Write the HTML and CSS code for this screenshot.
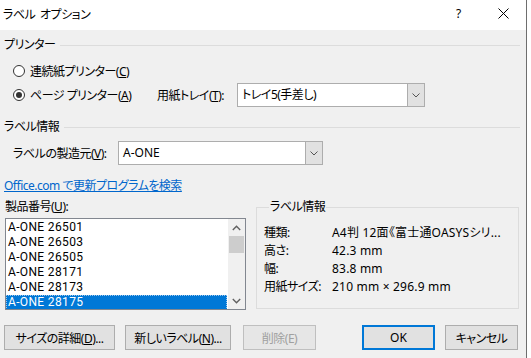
FILE: index.html
```html
<!DOCTYPE html>
<html>
	<head>
		<meta charset="utf-8" />
		<title>ラベル オプション</title>
		<link rel="stylesheet" href="styles.css">
	</head>
	<body>
		<div class="dialog">
			<div class="titlebar">
				<span class="title">ラベル オプション</span>
				<span class="help">?</span>
				<span class="close">
					<svg width="11" height="11" viewBox="0 0 11 11"><path d="M0.5 0.5L10.5 10.5M10.5 0.5L0.5 10.5" stroke="#000" stroke-width="1" fill="none" /></svg>
				</span>
			</div>
			<div class="content">
				<div class="group-head"><span>プリンター</span><i></i></div>
				<div class="radio-row first">
					<span class="radio"></span>
					<span>連続紙プリンター(<u>C</u>)</span>
				</div>
				<div class="radio-row">
					<span class="radio checked"></span>
					<span class="radio-text">ページ プリンター(<u>A</u>)</span>
					<span class="tray-label">用紙トレイ(<u>T</u>):</span>
					<div class="combo tray">
						<span class="combo-val">トレイ5(手差し)</span>
						<span class="combo-drop">
							<svg width="8" height="5" viewBox="0 0 8 5"><path d="M0.5 0.5L4 4L7.5 0.5" stroke="#555" fill="none" /></svg>
						</span>
					</div>
				</div>

				<div class="group-head second"><span>ラベル情報</span><i></i></div>
				<div class="maker-row">
					<span class="maker-label">ラベルの製造元(<u>V</u>):</span>
					<div class="combo maker">
						<span class="combo-val latin">A-ONE</span>
						<span class="combo-drop">
							<svg width="8" height="5" viewBox="0 0 8 5"><path d="M0.5 0.5L4 4L7.5 0.5" stroke="#555" fill="none" /></svg>
						</span>
					</div>
				</div>
				<a href="#" class="link">Office.com で更新プログラムを検索</a>

				<div class="lower">
					<div class="products">
						<div class="products-label">製品番号(<u>U</u>):</div>
						<div class="listbox">
							<div class="items">
								<div class="item">A-ONE 26501</div>
								<div class="item">A-ONE 26503</div>
								<div class="item">A-ONE 26505</div>
								<div class="item">A-ONE 28171</div>
								<div class="item">A-ONE 28173</div>
								<div class="item selected">A-ONE 28175</div>
							</div>
							<div class="scroll">
								<span class="arrow">
									<svg width="9" height="6" viewBox="0 0 9 6"><path d="M0.8 5L4.5 1.3L8.2 5" stroke="#606060" stroke-width="1.4" fill="none" /></svg>
								</span>
								<div class="track"><span class="thumb"></span></div>
								<span class="arrow">
									<svg width="9" height="6" viewBox="0 0 9 6"><path d="M0.8 1L4.5 4.7L8.2 1" stroke="#606060" stroke-width="1.4" fill="none" /></svg>
								</span>
							</div>
						</div>
					</div>
					<fieldset class="info">
						<legend>ラベル情報</legend>
						<div class="info-row"><span>種類:</span><span class="latin">A4判 12面《富士通OASYSシリ...</span></div>
						<div class="info-row"><span>高さ:</span><span class="latin">42.3 mm</span></div>
						<div class="info-row"><span>幅:</span><span class="latin">83.8 mm</span></div>
						<div class="info-row"><span>用紙サイズ:</span><span class="latin">210 mm × 296.9 mm</span></div>
					</fieldset>
				</div>

				<div class="buttons">
					<button class="btn size">サイズの詳細(<u>D</u>)...</button>
					<button class="btn new">新しいラベル(<u>N</u>)...</button>
					<button class="btn del" disabled>削除(E)</button>
					<button class="btn ok latin">OK</button>
					<button class="btn cancel">キャンセル</button>
				</div>
			</div>
		</div>
	</body>
</html>
```

FILE: styles.css
```css
* {
	padding: 0;
	margin: 0;
	box-sizing: border-box;
}

body {
	background-color: #fff;
	font-family: "Noto Sans", "Noto Sans CJK JP", sans-serif;
	font-size: 12px;
	color: #000;
	font-feature-settings: "palt";
	letter-spacing: -0.5px;
}

.latin {
	letter-spacing: 0;
}

.dialog {
	width: 527px;
	height: 358px;
	background-color: #f0f0f0;
	border-right: 1px solid #6e6e6e;
}

.titlebar {
	height: 30px;
	background-color: #fff;
	display: flex;
	align-items: center;
	padding: 0 0 3px 3px;
}

.title {
	flex: 1;
	word-spacing: 2px;
}

.help,
.close {
	width: 45px;
	display: flex;
	justify-content: center;
	align-items: center;
	letter-spacing: 0;
}

.content {
	padding: 7px 6px 0 4px;
}

.group-head {
	height: 16px;
	line-height: 16px;
	display: flex;
	align-items: center;
}

.group-head i {
	flex: 1;
	height: 1px;
	margin-left: 5px;
	background-color: #dcdcdc;
}

.group-head.second {
	margin-top: 12px;
}

.radio-row {
	height: 24px;
	display: flex;
	align-items: center;
	padding-left: 9px;
}

.radio-row.first {
	margin-top: 6px;
}

.radio {
	width: 12px;
	height: 12px;
	border: 1px solid #333;
	border-radius: 50%;
	background-color: #fff;
	margin-right: 5px;
	display: flex;
	justify-content: center;
	align-items: center;
}

.radio.checked::after {
	content: "";
	width: 6px;
	height: 6px;
	border-radius: 50%;
	background-color: #333;
}

.radio-text {
	width: 127px;
}

.tray-label {
	width: 80px;
}

.combo {
	height: 24px;
	display: flex;
	background-color: #fff;
	border: 1px solid #adadad;
}

.combo-val {
	flex: 1;
	line-height: 22px;
	padding-left: 4px;
}

.combo-drop {
	width: 17px;
	background-color: #e1e1e1;
	border-left: 1px solid #adadad;
	display: flex;
	justify-content: center;
	align-items: center;
}

.tray {
	width: 188px;
}

.maker-row {
	margin-top: 6px;
	height: 24px;
	display: flex;
	align-items: center;
	padding-left: 9px;
}

.maker-label {
	width: 105px;
}

.maker {
	width: 205px;
}

.link {
	display: block;
	width: max-content;
	margin-top: 13px;
	line-height: 16px;
	color: #0066cc;
	text-decoration: underline;
}

.lower {
	margin-top: 5px;
	display: flex;
	align-items: flex-start;
}

.products {
	margin-left: 1px;
}

.products-label {
	line-height: 16px;
}

.listbox {
	margin-top: 3px;
	width: 241px;
	height: 92px;
	border: 1px solid #828790;
	background-color: #fff;
	display: flex;
	overflow: hidden;
}

.items {
	flex: 1;
	padding-top: 1px;
}

.item {
	height: 15px;
	line-height: 15px;
	padding-left: 2px;
	font-family: Roboto, "Noto Sans", sans-serif;
	letter-spacing: 0.35px;
}

.item.selected {
	background-color: #0078d7;
	color: #fff;
	outline: 1px dotted #9fc6ea;
	outline-offset: -1px;
	margin-right: 1px;
}

.scroll {
	width: 17px;
	display: flex;
	flex-direction: column;
	background-color: #f0f0f0;
}

.arrow {
	height: 17px;
	display: flex;
	justify-content: center;
	align-items: center;
}

.track {
	flex: 1;
	padding: 0 1px;
}

.thumb {
	display: block;
	height: 17px;
	background-color: #cdcdcd;
}

.info {
	width: 263px;
	margin-left: 10px;
	border: 1px solid #dcdcdc;
	padding: 9px 0 12px 7px;
}

.info legend {
	margin-left: 5px;
	padding: 0 1px;
	line-height: 16px;
}

.info-row {
	display: grid;
	grid-template-columns: 68px 1fr;
	height: 18px;
	line-height: 18px;
	white-space: nowrap;
}

.info-row .latin {
	letter-spacing: 0.2px;
}

.buttons {
	margin-top: 15px;
	display: flex;
	padding-right: 2px;
}

.btn {
	height: 25px;
	font-family: inherit;
	font-size: 12px;
	color: #000;
	background-color: #e1e1e1;
	border: 1px solid #adadad;
	font-feature-settings: "palt";
	letter-spacing: -0.5px;
}

.size {
	width: 111px;
}

.new {
	width: 106px;
	margin-left: 10px;
}

.del {
	width: 73px;
	margin-left: 12px;
	color: #a0a0a0;
	border-color: #bfbfbf;
	background-color: #e6e6e6;
}

.ok {
	width: 73px;
	margin-left: auto;
	border: 2px solid #0078d7;
	letter-spacing: 0;
}

.cancel {
	width: 73px;
	margin-left: 10px;
}
```
